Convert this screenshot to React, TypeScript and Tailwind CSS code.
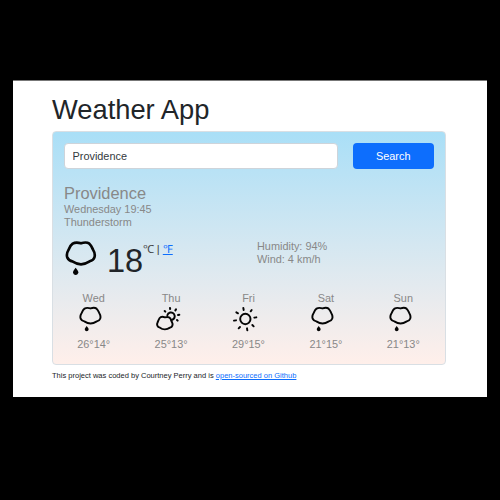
type Condition = "rain" | "partly" | "sun";

function RainIcon({ className }: { className: string }) {
  return (
    <svg viewBox="16 14 96 108" className={className} fill="none">
      <path
        d="M39 25 C47 20 55 21 64 24 C73 21 82 20 89 25 C95 30 97 36 100 43 C105 51 107 59 104 67 C102 73 97 76 90 78 C82 83 74 87 64 87 C54 87 46 83 38 78 C31 77 26 73 23 67 C20 59 22 51 27 43 C30 36 32 30 39 25 Z"
        stroke="#050505"
        strokeWidth="8"
        strokeLinejoin="round"
      />
      <path d="M48 97 C52 102 56 107 56 111 C56 116 52 119 48 119 C44 119 40 116 40 111 C40 107 44 102 48 97 Z" fill="#050505" />
    </svg>
  );
}

function PartlyIcon({ className }: { className: string }) {
  return (
    <svg viewBox="0 0 84 84" className={className} fill="none" stroke="#050505" strokeWidth="5.800" strokeLinecap="round" strokeLinejoin="round">
      <path d="M17 39 C21 34 27 35 33 37 C39 35 45 35 49 40 C51 44 52 48 54 52 C58 59 55 66 48 68 C39 74 26 74 18 68 C10 66 7 59 11 52 C13 47 14 43 17 39 Z" />
      <path d="M40 31 C42 22 54 19 60 27 C65 35 61 43 53 45" />
      <path d="M48 9 L48.500 12 M66 13 L64 16 M32 18 L34 20 M76 29 L72 30 M71 47 L69 45" strokeWidth="6" />
    </svg>
  );
}

function SunIcon({ className }: { className: string }) {
  return (
    <svg viewBox="0 0 84 84" className={className} fill="none" stroke="#050505" strokeWidth="5.800" strokeLinecap="round">
      <circle cx="43" cy="42" r="15.500" />
      <path d="M37 9 L38 15 M62 15 L59 19 M76 37 L70 38 M68 64 L64 60 M49 76 L48 70 M23 70 L27 66 M9 47 L15 46 M16 22 L21 25" />
    </svg>
  );
}

const days: { day: string; icon: Condition; temps: string }[] = [
  { day: "Wed", icon: "rain", temps: "26°14°" },
  { day: "Thu", icon: "partly", temps: "25°13°" },
  { day: "Fri", icon: "sun", temps: "29°15°" },
  { day: "Sat", icon: "rain", temps: "21°15°" },
  { day: "Sun", icon: "rain", temps: "21°13°" },
];

function DayIcon({ icon }: { icon: Condition }) {
  if (icon === "partly") return <PartlyIcon className="-mt-px -ml-[7px] size-7" />;
  if (icon === "sun") return <SunIcon className="-mt-px -ml-[7px] size-7" />;
  return <RainIcon className="-ml-[6px] h-[26px] w-[23.100px]" />;
}

export default function App() {
  return (
    <div className="h-[500px] w-[500px] bg-black pt-20 pl-[13px] font-['Liberation_Sans',Arial,sans-serif] text-[10.900px] leading-[13px] text-[#212529]">
      <main className="h-[317px] w-[473.500px] border-t border-[#777] bg-white pt-3 pr-[41px] pl-[39px]">
        <h1 className="h-[37px] text-[27.300px] leading-[33px]">Weather App</h1>
        <section className="mt-px h-[234px] rounded border border-[#d9dfe4] bg-linear-to-b from-[#a9dff7] to-[#ffefea] px-[11px] pt-[11px] text-[#888]">
          <form className="flex h-[26px] justify-between" onSubmit={(e) => e.preventDefault()}>
            <input
              type="text"
              defaultValue="Providence"
              className="w-[274px] rounded-[4px] border border-[#ced4da] bg-white px-[7.500px] text-[#343a40] outline-none"
            />
            <button className="w-[80.500px] rounded-[4px] bg-[#0d6efd] text-white">Search</button>
          </form>
          <h2 className="mt-[15px] h-[19px] text-[16.400px] leading-[18px]">Providence</h2>
          <p>Wednesday 19:45</p>
          <p>Thunderstorm</p>
          <div className="mt-[10px] flex h-[40px]">
            <div className="flex w-[193px]">
              <RainIcon className="mt-px ml-px h-9 w-8" />
              <span className="mt-[3px] ml-[10px] text-[32.500px] leading-[38px] text-[#212529]">18</span>
              <span className="mt-[4px] -ml-[0.500px] whitespace-pre text-[11.200px] text-[#444]">
                ℃ | <a href="#" className="text-[#0d6efd] underline">℉</a>
              </span>
            </div>
            <div className="mt-px">
              <p>Humidity: 94%</p>
              <p>Wind: 4 km/h</p>
            </div>
          </div>
          <div className="mt-[13px] -ml-[9px] grid w-[387px] grid-cols-5 text-center">
            {days.map((d) => (
              <div key={d.day} className="flex flex-col items-center">
                <span>{d.day}</span>
                <div className="flex h-[33px] items-start pt-[1px]">
                  <DayIcon icon={d.icon} />
                </div>
                <span>{d.temps}</span>
              </div>
            ))}
          </div>
        </section>
        <footer className="mt-[6px] text-[7.520px] leading-[10px]">
          This project was coded by Courtney Perry and is{" "}
          <a href="#" className="text-[#0d6efd] underline">open-sourced on Github</a>
        </footer>
      </main>
    </div>
  );
}
